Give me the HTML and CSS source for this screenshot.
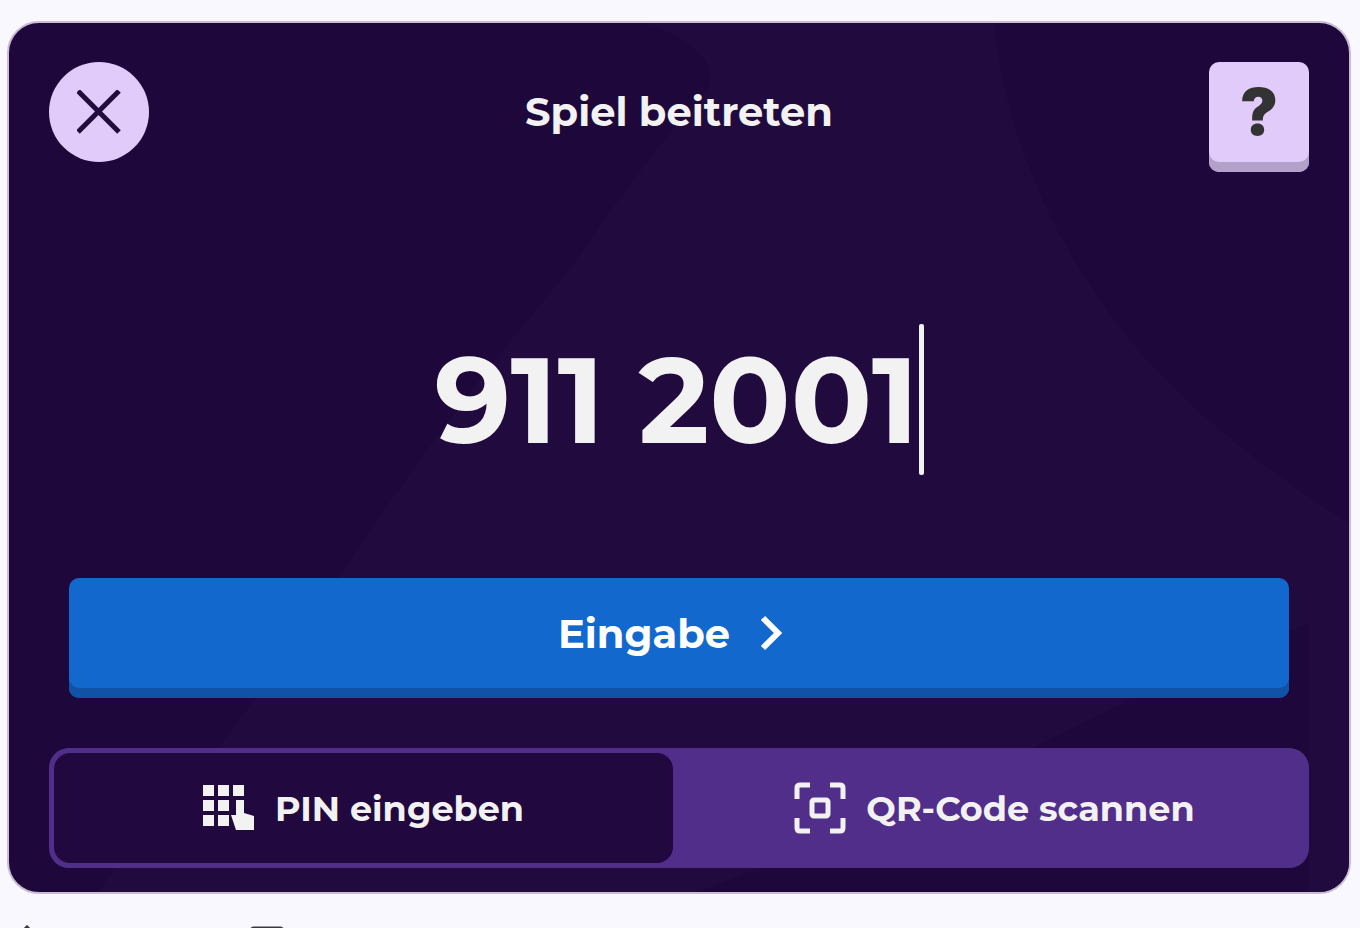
FILE: index.html
```html
<!DOCTYPE html>
<html lang="de">

<head>
    <meta charset="UTF-8">
    <meta name="viewport" content="width=device-width, initial-scale=1.0">
    <title>Spiel beitreten</title>
    <link rel="stylesheet" href="styles.css">
</head>

<body>
    <main class="card">
        <svg class="backdrop" viewBox="0 0 1340 869" preserveAspectRatio="none" aria-hidden="true">
            <path d="M636 0 Q710 25 700 65 Q640 130 561 246 Q430 400 330 555 Q260 660 190 750 Q120 820 90 869 H690 Q960 760 1120 677 L1300 600 V869 H1340 V500 Q1180 400 1100 290 Q1000 150 985 0 Z"/>
        </svg>
        <header class="header">
            <button class="close" type="button" aria-label="Schließen">
                <svg width="44" height="44" viewBox="0 0 44 44" aria-hidden="true">
                    <path d="M1 1 L42 42 M42 1 L1 42"/>
                </svg>
            </button>
            <h1 class="title">Spiel beitreten</h1>
            <button class="help" type="button">?</button>
        </header>
        <form class="form">
            <div class="pin">
                <input class="pin-input" type="text" inputmode="numeric" value="911 2001" aria-label="Spiel-PIN">
                <span class="caret"></span>
            </div>
            <button class="submit" type="button">
                Eingabe
                <svg width="40" height="36" viewBox="0 0 40 36" aria-hidden="true">
                    <path d="M3 3 L18 18 L3 33"/>
                </svg>
            </button>
        </form>
        <nav class="tabs">
            <button class="tab active" type="button">
                <svg class="solid" width="52" height="52" viewBox="0 0 52 52" aria-hidden="true">
                    <path d="M0 3h11v11H0z M15 3h11v11H15z M30 3h11v11H30z M0 18h11v11H0z M15 18h11v11H15z M0 33h11v11H0z M15 33h11v11H15z"/>
                    <path d="M33 18h8v13l10 3v14H33l-5-15h5z"/>
                </svg>
                PIN eingeben
            </button>
            <button class="tab" type="button">
                <svg class="scan" width="52" height="52" viewBox="0 0 52 52" aria-hidden="true">
                    <path d="M3 17V6q0-3 3-3h10 M36 3h10q3 0 3 3v11 M49 36v10q0 3-3 3H36 M16 49H6q-3 0-3-3V36"/>
                    <rect x="18" y="18" width="16" height="16" rx="2"/>
                </svg>
                QR-Code scannen
            </button>
        </nav>
    </main>
    <footer class="toolbar">
        <svg width="40" height="40" viewBox="0 0 40 40" aria-hidden="true">
            <path d="M4 18 L20 2 L36 18 V38 H4 Z"/>
        </svg>
        <svg width="40" height="40" viewBox="0 0 40 40" aria-hidden="true">
            <rect x="4" y="3" width="32" height="32" rx="3"/>
        </svg>
    </footer>
</body>

</html>
```
FILE: styles.css
```css
* {
    box-sizing: border-box;
}

body {
    height: 100vh;
    margin: 0;
    padding: 21px 9px 0 7px;
    overflow: hidden;
    background-color: #f9f8ff;
    font-family: Montserrat, Inter, sans-serif;
    color: #f2f2f2;
}

button,
input {
    border: none;
    padding: 0;
    font-family: inherit;
    color: inherit;
}

button {
    cursor: pointer;
}

svg {
    flex: none;
    fill: none;
    stroke: currentColor;
}

/* Karte */
.card {
    position: relative;
    padding: 39px 40px 24px;
    border: 2px solid #c8bdd4;
    border-radius: 32px;
    overflow: hidden;
    background-color: #1e083b;
}

.backdrop {
    position: absolute;
    inset: 0;
    width: 100%;
    height: 100%;
    fill: #210a3e;
    stroke: none;
}

/* Kopfzeile */
.header {
    position: relative;
    display: flex;
    justify-content: space-between;
    align-items: flex-start;
}

.close {
    display: flex;
    justify-content: center;
    align-items: center;
    width: 100px;
    height: 100px;
    border-radius: 50%;
    background-color: #e0cbfb;
    color: #230b40;
    stroke-width: 5px;
}

.title {
    margin: 0;
    font-size: 40px;
    line-height: 100px;
    font-weight: 700;
}

.help {
    width: 100px;
    height: 110px;
    padding-bottom: 12px;
    border-radius: 10px;
    background-color: #e0cbfb;
    box-shadow: inset 0 -10px 0 #b3a1cb;
    color: #333;
    font-family: Inter, sans-serif;
    font-size: 64px;
    font-weight: 900;
}

/* PIN */
.form {
    position: relative;
    padding: 152px 20px 50px;
}

.pin {
    display: flex;
    justify-content: center;
    margin-bottom: 103px;
}

.pin-input {
    width: 484px;
    height: 151px;
    background: none;
    font-size: 120px;
    font-weight: 700;
    text-align: right;
    outline: none;
}

.caret {
    width: 5px;
    border-radius: 2px;
    background-color: #f2f2f2;
}

.submit {
    display: flex;
    justify-content: center;
    align-items: center;
    gap: 30px;
    width: 100%;
    height: 120px;
    padding-bottom: 10px;
    border-radius: 10px;
    background-color: #1368ce;
    box-shadow: inset 0 -10px 0 #0f52a6;
    color: #fff;
    font-size: 40px;
    font-weight: 700;
    stroke-width: 6px;
}

/* Umschalter */
.tabs {
    position: relative;
    display: flex;
    gap: 12px;
    padding: 5px;
    border-radius: 20px;
    background-color: #522e8b;
}

.tab {
    display: flex;
    flex: 1;
    justify-content: center;
    align-items: center;
    gap: 20px;
    height: 110px;
    border-radius: 16px;
    background: none;
    font-size: 35px;
    font-weight: 700;
}

.tab.active {
    background-color: #21093f;
}

.solid {
    fill: currentColor;
    stroke: none;
}

.scan {
    stroke-width: 5px;
}

/* Leiste unter der Karte */
.toolbar {
    display: flex;
    gap: 200px;
    padding-top: 31px;
    color: #3d3548;
    stroke-width: 3px;
}
```
